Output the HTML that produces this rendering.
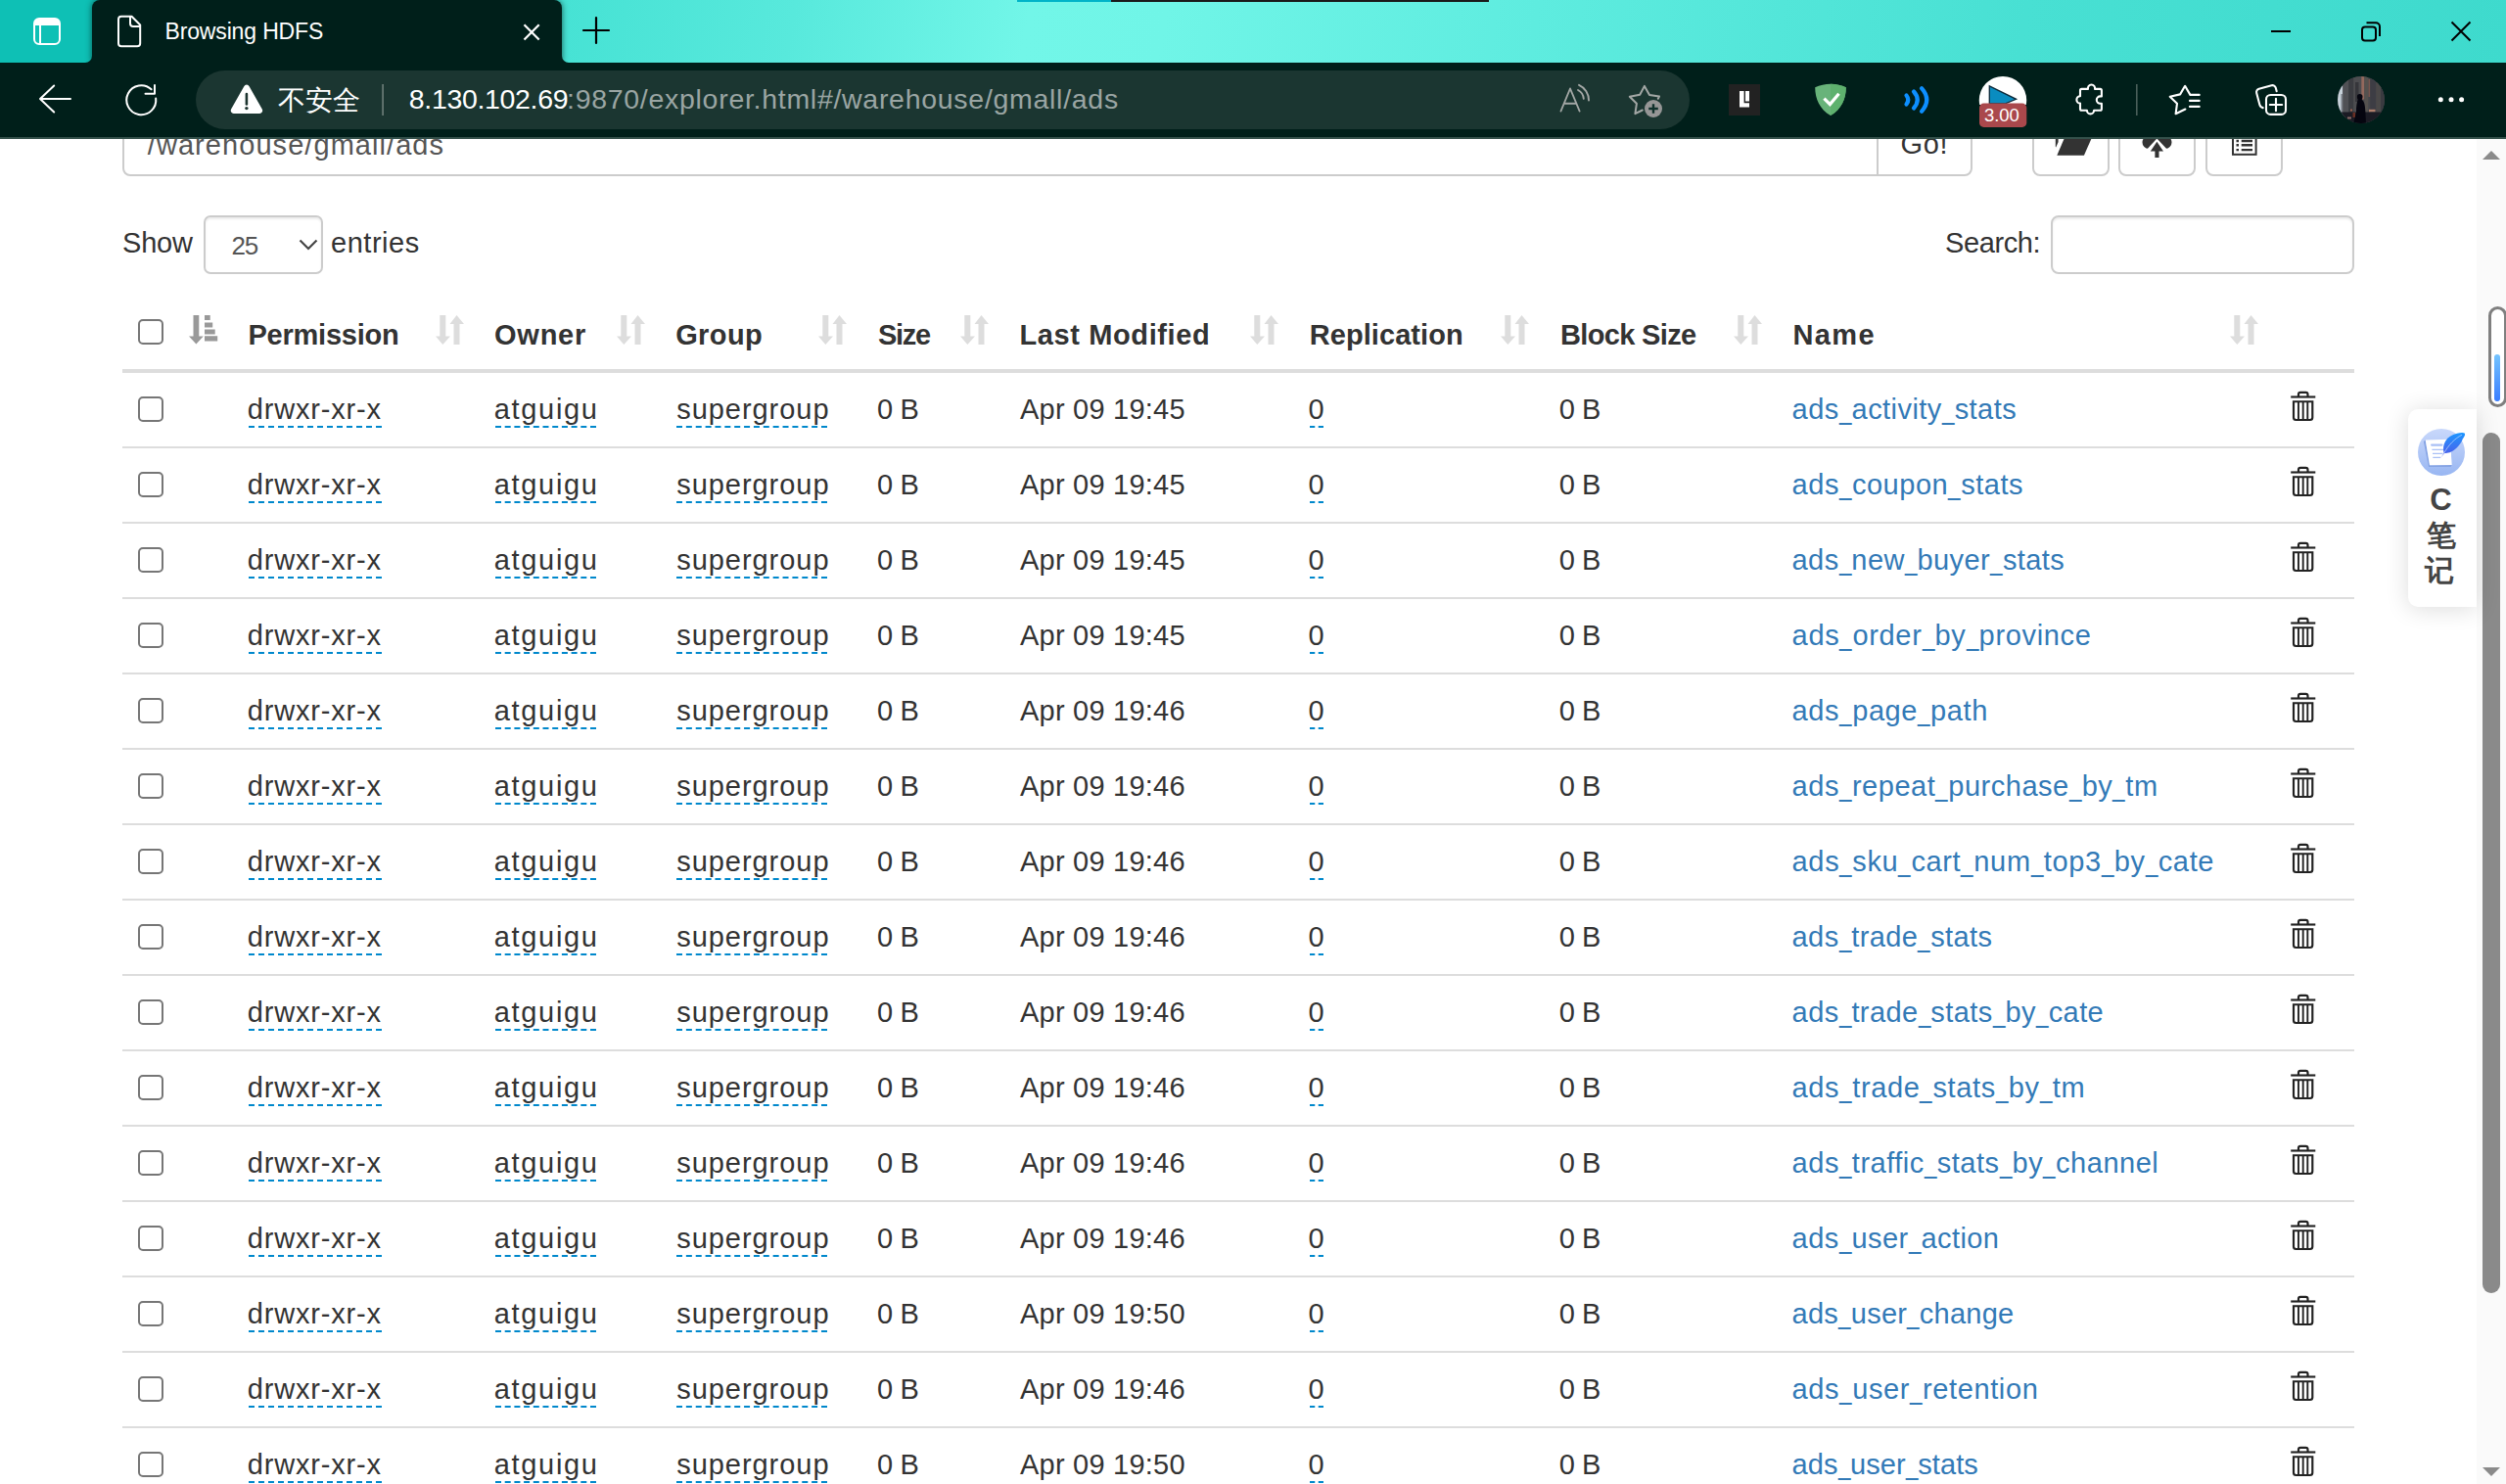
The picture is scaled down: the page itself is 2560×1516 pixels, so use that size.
<!DOCTYPE html><html lang="en"><head><meta charset="utf-8"><title>Browsing HDFS</title><style>
html,body{margin:0;padding:0}
body{width:2560px;height:1516px;overflow:hidden;position:relative;background:#fff;font-family:"Liberation Sans",sans-serif;color:#333}
.t{position:absolute;white-space:pre;line-height:normal}
.a{position:absolute}
#tabbar{position:absolute;left:0;top:0;width:2560px;height:64px;background:#001f1a}
#tbgrad{position:absolute;left:574px;top:0;width:1986px;height:64px;border-bottom-left-radius:7px;background:linear-gradient(100deg,#46e2d4 0%,#58e9dc 12%,#72f6e8 24%,#70f5e7 31%,#5eecdf 50%,#48e0d3 75%,#3edacd 100%)}
#tbleft{position:absolute;left:0;top:0;width:94px;height:64px;background:#0ec0b5;border-bottom-right-radius:7px}
#tab{position:absolute;left:94px;top:0;width:480px;height:64px;background:#001f1a;border-radius:8px 8px 0 0;box-shadow:0 0 6px rgba(0,30,25,.7)}
#toolbar{position:absolute;left:0;top:64px;width:2560px;height:76px;background:#001f1a;border-bottom:2px solid #34514b}
#pill{position:absolute;left:200px;top:8px;width:1526px;height:60px;border-radius:30px;background:#1b3631}
#page{position:absolute;left:0;top:141px;width:2560px;height:1375px;overflow:hidden;background:#fff}
.row{position:absolute;left:125px;width:2280px;height:75px;border-bottom:2px solid #ddd}
.cb{position:absolute;width:22px;height:22px;border:2px solid #767676;border-radius:5px;background:#fff}
.d{border-bottom:2px dashed #08c;padding-bottom:0}
.n i{display:inline-block;font-style:normal;letter-spacing:0;width:var(--w);transform:scaleX(.77);transform-origin:0 0}
.box{position:absolute;border:2px solid #ccc;border-radius:8px;background:#fff;box-sizing:border-box}
</style></head><body>
<div id="page">
<div class="box" style="left:125px;top:-20px;width:1794px;height:59px;border-radius:8px 0 0 8px"></div>
<span class="t" style="left:150.8px;top:-8.8px;font-size:29px;letter-spacing:1.06px;color:#555;">/warehouse/gmall/ads</span>
<div class="box" style="left:1917px;top:-20px;width:98px;height:59px;border-radius:0 8px 8px 0"></div>
<span class="t" style="left:1941.5px;top:-9.8px;font-size:29px;letter-spacing:0.66px;">Go!</span>
<div class="box" style="left:2076px;top:-20px;width:79px;height:59px"></div>
<div class="box" style="left:2164px;top:-20px;width:79px;height:59px"></div>
<div class="box" style="left:2252.5px;top:-20px;width:79px;height:59px"></div>
<span class="t" style="left:125.0px;top:91.1px;font-size:29px;letter-spacing:-0.20px;">Show</span>
<div class="box" style="left:207.500px;top:79px;width:122px;height:60px;border-radius:7px;box-shadow:inset 0 2px 2px rgba(0,0,0,.075)"></div>
<span class="t" style="left:236.5px;top:95.0px;font-size:26px;letter-spacing:-1.21px;color:#555;">25</span>
<svg class="a" style="left:304px;top:102px" width="22" height="14" viewBox="0 0 22 14"><path d="M2.5 2.5 L11 11 L19.5 2.5" fill="none" stroke="#444" stroke-width="2.2"/></svg>
<span class="t" style="left:338.0px;top:91.1px;font-size:29px;letter-spacing:0.53px;">entries</span>
<span class="t" style="left:1987.0px;top:91.1px;font-size:29px;letter-spacing:-0.40px;">Search:</span>
<div class="box" style="left:2095px;top:79px;width:310px;height:60px;box-shadow:inset 0 2px 2px rgba(0,0,0,.075)"></div>
<div class="cb" style="left:141px;top:185px"></div>
<span class="t" style="left:253.5px;top:184.7px;font-size:29px;font-weight:700;letter-spacing:-0.24px;">Permission</span>
<span class="t" style="left:505.0px;top:184.7px;font-size:29px;font-weight:700;letter-spacing:0.76px;">Owner</span>
<span class="t" style="left:690.2px;top:184.7px;font-size:29px;font-weight:700;letter-spacing:0.38px;">Group</span>
<span class="t" style="left:897.0px;top:184.7px;font-size:29px;font-weight:700;letter-spacing:-1.30px;">Size</span>
<span class="t" style="left:1041.5px;top:184.7px;font-size:29px;font-weight:700;letter-spacing:0.61px;">Last Modified</span>
<span class="t" style="left:1337.7px;top:184.7px;font-size:29px;font-weight:700;letter-spacing:0.07px;">Replication</span>
<span class="t" style="left:1594.0px;top:184.7px;font-size:29px;font-weight:700;letter-spacing:-0.66px;">Block Size</span>
<span class="t" style="left:1831.5px;top:184.7px;font-size:29px;font-weight:700;letter-spacing:1.38px;">Name</span>
<div class="a" style="left:125px;top:236px;width:2280px;height:4px;background:#ddd"></div>
<svg class="a" style="left:193px;top:181px" width="30" height="30" viewBox="0 0 30 30" ><path fill="#999" d="M4.5 0h5.8v21.5h4.5L7.4 29.5 0 21.5h4.5z"/><path fill="#999" d="M16 0h5.7v5H16zM16 7.5h8.2v5H16zM16 14.5h10.7v5H16zM16 21.3h13.2v5.2H16z"/></svg>
<svg class="a" style="left:444.6px;top:181.3px" width="29" height="30" viewBox="0 0 29 30" ><path fill="#ddd" d="M4.3 0h6v21.5h4.7L7.3 30 0 21.5h4.3z"/><path fill="#ddd" d="M18.5 30h6V9h4.5L21.5 0 14.5 9h4z"/></svg>
<svg class="a" style="left:630.2px;top:181.3px" width="29" height="30" viewBox="0 0 29 30" ><path fill="#ddd" d="M4.3 0h6v21.5h4.7L7.3 30 0 21.5h4.3z"/><path fill="#ddd" d="M18.5 30h6V9h4.5L21.5 0 14.5 9h4z"/></svg>
<svg class="a" style="left:835.8px;top:181.3px" width="29" height="30" viewBox="0 0 29 30" ><path fill="#ddd" d="M4.3 0h6v21.5h4.7L7.3 30 0 21.5h4.3z"/><path fill="#ddd" d="M18.5 30h6V9h4.5L21.5 0 14.5 9h4z"/></svg>
<svg class="a" style="left:980.6px;top:181.3px" width="29" height="30" viewBox="0 0 29 30" ><path fill="#ddd" d="M4.3 0h6v21.5h4.7L7.3 30 0 21.5h4.3z"/><path fill="#ddd" d="M18.5 30h6V9h4.5L21.5 0 14.5 9h4z"/></svg>
<svg class="a" style="left:1276.6px;top:181.3px" width="29" height="30" viewBox="0 0 29 30" ><path fill="#ddd" d="M4.3 0h6v21.5h4.7L7.3 30 0 21.5h4.3z"/><path fill="#ddd" d="M18.5 30h6V9h4.5L21.5 0 14.5 9h4z"/></svg>
<svg class="a" style="left:1532.6px;top:181.3px" width="29" height="30" viewBox="0 0 29 30" ><path fill="#ddd" d="M4.3 0h6v21.5h4.7L7.3 30 0 21.5h4.3z"/><path fill="#ddd" d="M18.5 30h6V9h4.5L21.5 0 14.5 9h4z"/></svg>
<svg class="a" style="left:1770.6px;top:181.3px" width="29" height="30" viewBox="0 0 29 30" ><path fill="#ddd" d="M4.3 0h6v21.5h4.7L7.3 30 0 21.5h4.3z"/><path fill="#ddd" d="M18.5 30h6V9h4.5L21.5 0 14.5 9h4z"/></svg>
<svg class="a" style="left:2277.6px;top:181.3px" width="29" height="30" viewBox="0 0 29 30" ><path fill="#ddd" d="M4.3 0h6v21.5h4.7L7.3 30 0 21.5h4.3z"/><path fill="#ddd" d="M18.5 30h6V9h4.5L21.5 0 14.5 9h4z"/></svg>
<div class="row" style="top:240px"></div>
<div class="cb" style="left:141px;top:264px"></div>
<span class="t d" style="left:253.8px;top:261.0px;width:135.8px;text-indent:-1.0px;font-size:29px;letter-spacing:0.82px;">drwxr-xr-x</span>
<span class="t d" style="left:505.8px;top:261.0px;width:103.0px;text-indent:-1.0px;font-size:29px;letter-spacing:1.66px;">atguigu</span>
<span class="t d" style="left:691.2px;top:261.0px;width:154.2px;text-indent:0.0px;font-size:29px;letter-spacing:0.96px;">supergroup</span>
<span class="t" style="left:896.0px;top:261.0px;font-size:29px;letter-spacing:-0.34px;">0 B</span>
<span class="t" style="left:1042.0px;top:261.0px;font-size:29px;letter-spacing:0.23px;">Apr 09 19:45</span>
<span class="t d" style="left:1337.5px;top:261.0px;width:14.0px;text-indent:-1.0px;font-size:29px;">0</span>
<span class="t" style="left:1592.8px;top:261.0px;font-size:29px;letter-spacing:-0.47px;">0 B</span>
<span class="t n" style="left:1830.6px;top:261.0px;font-size:29px;letter-spacing:0.45px;color:#337ab7;--w:12.85px;">ads<i>_</i>activity<i>_</i>stats</span>
<svg class="a" style="left:2339px;top:258px" width="28" height="32" viewBox="0 0 28 32" ><g fill="none" stroke="#222" stroke-width="2.150"><path d="M1.200 6.500H26.300"/><path d="M9 6.5V3.8a2 2 0 0 1 2-2h5.5a2 2 0 0 1 2 2V6.5"/><path d="M4 11.2H23.3V27.5a2.5 2.5 0 0 1-2.5 2.5H6.5A2.5 2.5 0 0 1 4 27.5Z"/><path d="M9 11.5V30M13.7 11.5V30M18.3 11.5V30" stroke-width="1.9"/></g></svg>
<div class="row" style="top:317px"></div>
<div class="cb" style="left:141px;top:341px"></div>
<span class="t d" style="left:253.8px;top:338.0px;width:135.8px;text-indent:-1.0px;font-size:29px;letter-spacing:0.82px;">drwxr-xr-x</span>
<span class="t d" style="left:505.8px;top:338.0px;width:103.0px;text-indent:-1.0px;font-size:29px;letter-spacing:1.66px;">atguigu</span>
<span class="t d" style="left:691.2px;top:338.0px;width:154.2px;text-indent:0.0px;font-size:29px;letter-spacing:0.96px;">supergroup</span>
<span class="t" style="left:896.0px;top:338.0px;font-size:29px;letter-spacing:-0.34px;">0 B</span>
<span class="t" style="left:1042.0px;top:338.0px;font-size:29px;letter-spacing:0.23px;">Apr 09 19:45</span>
<span class="t d" style="left:1337.5px;top:338.0px;width:14.0px;text-indent:-1.0px;font-size:29px;">0</span>
<span class="t" style="left:1592.8px;top:338.0px;font-size:29px;letter-spacing:-0.47px;">0 B</span>
<span class="t n" style="left:1830.6px;top:338.0px;font-size:29px;letter-spacing:0.53px;color:#337ab7;--w:12.93px;">ads<i>_</i>coupon<i>_</i>stats</span>
<svg class="a" style="left:2339px;top:335px" width="28" height="32" viewBox="0 0 28 32" ><g fill="none" stroke="#222" stroke-width="2.150"><path d="M1.200 6.500H26.300"/><path d="M9 6.5V3.8a2 2 0 0 1 2-2h5.5a2 2 0 0 1 2 2V6.5"/><path d="M4 11.2H23.3V27.5a2.5 2.5 0 0 1-2.5 2.5H6.5A2.5 2.5 0 0 1 4 27.5Z"/><path d="M9 11.5V30M13.7 11.5V30M18.3 11.5V30" stroke-width="1.9"/></g></svg>
<div class="row" style="top:394px"></div>
<div class="cb" style="left:141px;top:418px"></div>
<span class="t d" style="left:253.8px;top:415.0px;width:135.8px;text-indent:-1.0px;font-size:29px;letter-spacing:0.82px;">drwxr-xr-x</span>
<span class="t d" style="left:505.8px;top:415.0px;width:103.0px;text-indent:-1.0px;font-size:29px;letter-spacing:1.66px;">atguigu</span>
<span class="t d" style="left:691.2px;top:415.0px;width:154.2px;text-indent:0.0px;font-size:29px;letter-spacing:0.96px;">supergroup</span>
<span class="t" style="left:896.0px;top:415.0px;font-size:29px;letter-spacing:-0.34px;">0 B</span>
<span class="t" style="left:1042.0px;top:415.0px;font-size:29px;letter-spacing:0.23px;">Apr 09 19:45</span>
<span class="t d" style="left:1337.5px;top:415.0px;width:14.0px;text-indent:-1.0px;font-size:29px;">0</span>
<span class="t" style="left:1592.8px;top:415.0px;font-size:29px;letter-spacing:-0.47px;">0 B</span>
<span class="t n" style="left:1830.6px;top:415.0px;font-size:29px;letter-spacing:0.40px;color:#337ab7;--w:12.80px;">ads<i>_</i>new<i>_</i>buyer<i>_</i>stats</span>
<svg class="a" style="left:2339px;top:412px" width="28" height="32" viewBox="0 0 28 32" ><g fill="none" stroke="#222" stroke-width="2.150"><path d="M1.200 6.500H26.300"/><path d="M9 6.5V3.8a2 2 0 0 1 2-2h5.5a2 2 0 0 1 2 2V6.5"/><path d="M4 11.2H23.3V27.5a2.5 2.5 0 0 1-2.5 2.5H6.5A2.5 2.5 0 0 1 4 27.5Z"/><path d="M9 11.5V30M13.7 11.5V30M18.3 11.5V30" stroke-width="1.9"/></g></svg>
<div class="row" style="top:471px"></div>
<div class="cb" style="left:141px;top:495px"></div>
<span class="t d" style="left:253.8px;top:492.0px;width:135.8px;text-indent:-1.0px;font-size:29px;letter-spacing:0.82px;">drwxr-xr-x</span>
<span class="t d" style="left:505.8px;top:492.0px;width:103.0px;text-indent:-1.0px;font-size:29px;letter-spacing:1.66px;">atguigu</span>
<span class="t d" style="left:691.2px;top:492.0px;width:154.2px;text-indent:0.0px;font-size:29px;letter-spacing:0.96px;">supergroup</span>
<span class="t" style="left:896.0px;top:492.0px;font-size:29px;letter-spacing:-0.34px;">0 B</span>
<span class="t" style="left:1042.0px;top:492.0px;font-size:29px;letter-spacing:0.23px;">Apr 09 19:45</span>
<span class="t d" style="left:1337.5px;top:492.0px;width:14.0px;text-indent:-1.0px;font-size:29px;">0</span>
<span class="t" style="left:1592.8px;top:492.0px;font-size:29px;letter-spacing:-0.47px;">0 B</span>
<span class="t n" style="left:1830.6px;top:492.0px;font-size:29px;letter-spacing:0.67px;color:#337ab7;--w:13.07px;">ads<i>_</i>order<i>_</i>by<i>_</i>province</span>
<svg class="a" style="left:2339px;top:489px" width="28" height="32" viewBox="0 0 28 32" ><g fill="none" stroke="#222" stroke-width="2.150"><path d="M1.200 6.500H26.300"/><path d="M9 6.5V3.8a2 2 0 0 1 2-2h5.5a2 2 0 0 1 2 2V6.5"/><path d="M4 11.2H23.3V27.5a2.5 2.5 0 0 1-2.5 2.5H6.5A2.5 2.5 0 0 1 4 27.5Z"/><path d="M9 11.5V30M13.7 11.5V30M18.3 11.5V30" stroke-width="1.9"/></g></svg>
<div class="row" style="top:548px"></div>
<div class="cb" style="left:141px;top:572px"></div>
<span class="t d" style="left:253.8px;top:569.0px;width:135.8px;text-indent:-1.0px;font-size:29px;letter-spacing:0.82px;">drwxr-xr-x</span>
<span class="t d" style="left:505.8px;top:569.0px;width:103.0px;text-indent:-1.0px;font-size:29px;letter-spacing:1.66px;">atguigu</span>
<span class="t d" style="left:691.2px;top:569.0px;width:154.2px;text-indent:0.0px;font-size:29px;letter-spacing:0.96px;">supergroup</span>
<span class="t" style="left:896.0px;top:569.0px;font-size:29px;letter-spacing:-0.34px;">0 B</span>
<span class="t" style="left:1042.0px;top:569.0px;font-size:29px;letter-spacing:0.23px;">Apr 09 19:46</span>
<span class="t d" style="left:1337.5px;top:569.0px;width:14.0px;text-indent:-1.0px;font-size:29px;">0</span>
<span class="t" style="left:1592.8px;top:569.0px;font-size:29px;letter-spacing:-0.47px;">0 B</span>
<span class="t n" style="left:1830.6px;top:569.0px;font-size:29px;letter-spacing:0.60px;color:#337ab7;--w:13.00px;">ads<i>_</i>page<i>_</i>path</span>
<svg class="a" style="left:2339px;top:566px" width="28" height="32" viewBox="0 0 28 32" ><g fill="none" stroke="#222" stroke-width="2.150"><path d="M1.200 6.500H26.300"/><path d="M9 6.5V3.8a2 2 0 0 1 2-2h5.5a2 2 0 0 1 2 2V6.5"/><path d="M4 11.2H23.3V27.5a2.5 2.5 0 0 1-2.5 2.5H6.5A2.5 2.5 0 0 1 4 27.5Z"/><path d="M9 11.5V30M13.7 11.5V30M18.3 11.5V30" stroke-width="1.9"/></g></svg>
<div class="row" style="top:625px"></div>
<div class="cb" style="left:141px;top:649px"></div>
<span class="t d" style="left:253.8px;top:646.0px;width:135.8px;text-indent:-1.0px;font-size:29px;letter-spacing:0.82px;">drwxr-xr-x</span>
<span class="t d" style="left:505.8px;top:646.0px;width:103.0px;text-indent:-1.0px;font-size:29px;letter-spacing:1.66px;">atguigu</span>
<span class="t d" style="left:691.2px;top:646.0px;width:154.2px;text-indent:0.0px;font-size:29px;letter-spacing:0.96px;">supergroup</span>
<span class="t" style="left:896.0px;top:646.0px;font-size:29px;letter-spacing:-0.34px;">0 B</span>
<span class="t" style="left:1042.0px;top:646.0px;font-size:29px;letter-spacing:0.23px;">Apr 09 19:46</span>
<span class="t d" style="left:1337.5px;top:646.0px;width:14.0px;text-indent:-1.0px;font-size:29px;">0</span>
<span class="t" style="left:1592.8px;top:646.0px;font-size:29px;letter-spacing:-0.47px;">0 B</span>
<span class="t n" style="left:1830.6px;top:646.0px;font-size:29px;letter-spacing:0.53px;color:#337ab7;--w:12.93px;">ads<i>_</i>repeat<i>_</i>purchase<i>_</i>by<i>_</i>tm</span>
<svg class="a" style="left:2339px;top:643px" width="28" height="32" viewBox="0 0 28 32" ><g fill="none" stroke="#222" stroke-width="2.150"><path d="M1.200 6.500H26.300"/><path d="M9 6.5V3.8a2 2 0 0 1 2-2h5.5a2 2 0 0 1 2 2V6.5"/><path d="M4 11.2H23.3V27.5a2.5 2.5 0 0 1-2.5 2.5H6.5A2.5 2.5 0 0 1 4 27.5Z"/><path d="M9 11.5V30M13.7 11.5V30M18.3 11.5V30" stroke-width="1.9"/></g></svg>
<div class="row" style="top:702px"></div>
<div class="cb" style="left:141px;top:726px"></div>
<span class="t d" style="left:253.8px;top:723.0px;width:135.8px;text-indent:-1.0px;font-size:29px;letter-spacing:0.82px;">drwxr-xr-x</span>
<span class="t d" style="left:505.8px;top:723.0px;width:103.0px;text-indent:-1.0px;font-size:29px;letter-spacing:1.66px;">atguigu</span>
<span class="t d" style="left:691.2px;top:723.0px;width:154.2px;text-indent:0.0px;font-size:29px;letter-spacing:0.96px;">supergroup</span>
<span class="t" style="left:896.0px;top:723.0px;font-size:29px;letter-spacing:-0.34px;">0 B</span>
<span class="t" style="left:1042.0px;top:723.0px;font-size:29px;letter-spacing:0.23px;">Apr 09 19:46</span>
<span class="t d" style="left:1337.5px;top:723.0px;width:14.0px;text-indent:-1.0px;font-size:29px;">0</span>
<span class="t" style="left:1592.8px;top:723.0px;font-size:29px;letter-spacing:-0.47px;">0 B</span>
<span class="t n" style="left:1830.6px;top:723.0px;font-size:29px;letter-spacing:0.64px;color:#337ab7;--w:13.04px;">ads<i>_</i>sku<i>_</i>cart<i>_</i>num<i>_</i>top3<i>_</i>by<i>_</i>cate</span>
<svg class="a" style="left:2339px;top:720px" width="28" height="32" viewBox="0 0 28 32" ><g fill="none" stroke="#222" stroke-width="2.150"><path d="M1.200 6.500H26.300"/><path d="M9 6.5V3.8a2 2 0 0 1 2-2h5.5a2 2 0 0 1 2 2V6.5"/><path d="M4 11.2H23.3V27.5a2.5 2.5 0 0 1-2.5 2.5H6.5A2.5 2.5 0 0 1 4 27.5Z"/><path d="M9 11.5V30M13.7 11.5V30M18.3 11.5V30" stroke-width="1.9"/></g></svg>
<div class="row" style="top:779px"></div>
<div class="cb" style="left:141px;top:803px"></div>
<span class="t d" style="left:253.8px;top:800.0px;width:135.8px;text-indent:-1.0px;font-size:29px;letter-spacing:0.82px;">drwxr-xr-x</span>
<span class="t d" style="left:505.8px;top:800.0px;width:103.0px;text-indent:-1.0px;font-size:29px;letter-spacing:1.66px;">atguigu</span>
<span class="t d" style="left:691.2px;top:800.0px;width:154.2px;text-indent:0.0px;font-size:29px;letter-spacing:0.96px;">supergroup</span>
<span class="t" style="left:896.0px;top:800.0px;font-size:29px;letter-spacing:-0.34px;">0 B</span>
<span class="t" style="left:1042.0px;top:800.0px;font-size:29px;letter-spacing:0.23px;">Apr 09 19:46</span>
<span class="t d" style="left:1337.5px;top:800.0px;width:14.0px;text-indent:-1.0px;font-size:29px;">0</span>
<span class="t" style="left:1592.8px;top:800.0px;font-size:29px;letter-spacing:-0.47px;">0 B</span>
<span class="t n" style="left:1830.6px;top:800.0px;font-size:29px;letter-spacing:0.39px;color:#337ab7;--w:12.79px;">ads<i>_</i>trade<i>_</i>stats</span>
<svg class="a" style="left:2339px;top:797px" width="28" height="32" viewBox="0 0 28 32" ><g fill="none" stroke="#222" stroke-width="2.150"><path d="M1.200 6.500H26.300"/><path d="M9 6.5V3.8a2 2 0 0 1 2-2h5.5a2 2 0 0 1 2 2V6.5"/><path d="M4 11.2H23.3V27.5a2.5 2.5 0 0 1-2.5 2.5H6.5A2.5 2.5 0 0 1 4 27.5Z"/><path d="M9 11.5V30M13.7 11.5V30M18.3 11.5V30" stroke-width="1.9"/></g></svg>
<div class="row" style="top:856px"></div>
<div class="cb" style="left:141px;top:880px"></div>
<span class="t d" style="left:253.8px;top:877.0px;width:135.8px;text-indent:-1.0px;font-size:29px;letter-spacing:0.82px;">drwxr-xr-x</span>
<span class="t d" style="left:505.8px;top:877.0px;width:103.0px;text-indent:-1.0px;font-size:29px;letter-spacing:1.66px;">atguigu</span>
<span class="t d" style="left:691.2px;top:877.0px;width:154.2px;text-indent:0.0px;font-size:29px;letter-spacing:0.96px;">supergroup</span>
<span class="t" style="left:896.0px;top:877.0px;font-size:29px;letter-spacing:-0.34px;">0 B</span>
<span class="t" style="left:1042.0px;top:877.0px;font-size:29px;letter-spacing:0.23px;">Apr 09 19:46</span>
<span class="t d" style="left:1337.5px;top:877.0px;width:14.0px;text-indent:-1.0px;font-size:29px;">0</span>
<span class="t" style="left:1592.8px;top:877.0px;font-size:29px;letter-spacing:-0.47px;">0 B</span>
<span class="t n" style="left:1830.6px;top:877.0px;font-size:29px;letter-spacing:0.41px;color:#337ab7;--w:12.81px;">ads<i>_</i>trade<i>_</i>stats<i>_</i>by<i>_</i>cate</span>
<svg class="a" style="left:2339px;top:874px" width="28" height="32" viewBox="0 0 28 32" ><g fill="none" stroke="#222" stroke-width="2.150"><path d="M1.200 6.500H26.300"/><path d="M9 6.5V3.8a2 2 0 0 1 2-2h5.5a2 2 0 0 1 2 2V6.5"/><path d="M4 11.2H23.3V27.5a2.5 2.5 0 0 1-2.5 2.5H6.5A2.5 2.5 0 0 1 4 27.5Z"/><path d="M9 11.5V30M13.7 11.5V30M18.3 11.5V30" stroke-width="1.9"/></g></svg>
<div class="row" style="top:933px"></div>
<div class="cb" style="left:141px;top:957px"></div>
<span class="t d" style="left:253.8px;top:954.0px;width:135.8px;text-indent:-1.0px;font-size:29px;letter-spacing:0.82px;">drwxr-xr-x</span>
<span class="t d" style="left:505.8px;top:954.0px;width:103.0px;text-indent:-1.0px;font-size:29px;letter-spacing:1.66px;">atguigu</span>
<span class="t d" style="left:691.2px;top:954.0px;width:154.2px;text-indent:0.0px;font-size:29px;letter-spacing:0.96px;">supergroup</span>
<span class="t" style="left:896.0px;top:954.0px;font-size:29px;letter-spacing:-0.34px;">0 B</span>
<span class="t" style="left:1042.0px;top:954.0px;font-size:29px;letter-spacing:0.23px;">Apr 09 19:46</span>
<span class="t d" style="left:1337.5px;top:954.0px;width:14.0px;text-indent:-1.0px;font-size:29px;">0</span>
<span class="t" style="left:1592.8px;top:954.0px;font-size:29px;letter-spacing:-0.47px;">0 B</span>
<span class="t n" style="left:1830.6px;top:954.0px;font-size:29px;letter-spacing:0.62px;color:#337ab7;--w:13.02px;">ads<i>_</i>trade<i>_</i>stats<i>_</i>by<i>_</i>tm</span>
<svg class="a" style="left:2339px;top:951px" width="28" height="32" viewBox="0 0 28 32" ><g fill="none" stroke="#222" stroke-width="2.150"><path d="M1.200 6.500H26.300"/><path d="M9 6.5V3.8a2 2 0 0 1 2-2h5.5a2 2 0 0 1 2 2V6.5"/><path d="M4 11.2H23.3V27.5a2.5 2.5 0 0 1-2.5 2.5H6.5A2.5 2.5 0 0 1 4 27.5Z"/><path d="M9 11.5V30M13.7 11.5V30M18.3 11.5V30" stroke-width="1.9"/></g></svg>
<div class="row" style="top:1010px"></div>
<div class="cb" style="left:141px;top:1034px"></div>
<span class="t d" style="left:253.8px;top:1031.0px;width:135.8px;text-indent:-1.0px;font-size:29px;letter-spacing:0.82px;">drwxr-xr-x</span>
<span class="t d" style="left:505.8px;top:1031.0px;width:103.0px;text-indent:-1.0px;font-size:29px;letter-spacing:1.66px;">atguigu</span>
<span class="t d" style="left:691.2px;top:1031.0px;width:154.2px;text-indent:0.0px;font-size:29px;letter-spacing:0.96px;">supergroup</span>
<span class="t" style="left:896.0px;top:1031.0px;font-size:29px;letter-spacing:-0.34px;">0 B</span>
<span class="t" style="left:1042.0px;top:1031.0px;font-size:29px;letter-spacing:0.23px;">Apr 09 19:46</span>
<span class="t d" style="left:1337.5px;top:1031.0px;width:14.0px;text-indent:-1.0px;font-size:29px;">0</span>
<span class="t" style="left:1592.8px;top:1031.0px;font-size:29px;letter-spacing:-0.47px;">0 B</span>
<span class="t n" style="left:1830.6px;top:1031.0px;font-size:29px;letter-spacing:0.52px;color:#337ab7;--w:12.92px;">ads<i>_</i>traffic<i>_</i>stats<i>_</i>by<i>_</i>channel</span>
<svg class="a" style="left:2339px;top:1028px" width="28" height="32" viewBox="0 0 28 32" ><g fill="none" stroke="#222" stroke-width="2.150"><path d="M1.200 6.500H26.300"/><path d="M9 6.5V3.8a2 2 0 0 1 2-2h5.5a2 2 0 0 1 2 2V6.5"/><path d="M4 11.2H23.3V27.5a2.5 2.5 0 0 1-2.5 2.5H6.5A2.5 2.5 0 0 1 4 27.5Z"/><path d="M9 11.5V30M13.7 11.5V30M18.3 11.5V30" stroke-width="1.9"/></g></svg>
<div class="row" style="top:1087px"></div>
<div class="cb" style="left:141px;top:1111px"></div>
<span class="t d" style="left:253.8px;top:1108.0px;width:135.8px;text-indent:-1.0px;font-size:29px;letter-spacing:0.82px;">drwxr-xr-x</span>
<span class="t d" style="left:505.8px;top:1108.0px;width:103.0px;text-indent:-1.0px;font-size:29px;letter-spacing:1.66px;">atguigu</span>
<span class="t d" style="left:691.2px;top:1108.0px;width:154.2px;text-indent:0.0px;font-size:29px;letter-spacing:0.96px;">supergroup</span>
<span class="t" style="left:896.0px;top:1108.0px;font-size:29px;letter-spacing:-0.34px;">0 B</span>
<span class="t" style="left:1042.0px;top:1108.0px;font-size:29px;letter-spacing:0.23px;">Apr 09 19:46</span>
<span class="t d" style="left:1337.5px;top:1108.0px;width:14.0px;text-indent:-1.0px;font-size:29px;">0</span>
<span class="t" style="left:1592.8px;top:1108.0px;font-size:29px;letter-spacing:-0.47px;">0 B</span>
<span class="t n" style="left:1830.6px;top:1108.0px;font-size:29px;letter-spacing:0.43px;color:#337ab7;--w:12.83px;">ads<i>_</i>user<i>_</i>action</span>
<svg class="a" style="left:2339px;top:1105px" width="28" height="32" viewBox="0 0 28 32" ><g fill="none" stroke="#222" stroke-width="2.150"><path d="M1.200 6.500H26.300"/><path d="M9 6.5V3.8a2 2 0 0 1 2-2h5.5a2 2 0 0 1 2 2V6.5"/><path d="M4 11.2H23.3V27.5a2.5 2.5 0 0 1-2.5 2.5H6.5A2.5 2.5 0 0 1 4 27.5Z"/><path d="M9 11.5V30M13.7 11.5V30M18.3 11.5V30" stroke-width="1.9"/></g></svg>
<div class="row" style="top:1164px"></div>
<div class="cb" style="left:141px;top:1188px"></div>
<span class="t d" style="left:253.8px;top:1185.0px;width:135.8px;text-indent:-1.0px;font-size:29px;letter-spacing:0.82px;">drwxr-xr-x</span>
<span class="t d" style="left:505.8px;top:1185.0px;width:103.0px;text-indent:-1.0px;font-size:29px;letter-spacing:1.66px;">atguigu</span>
<span class="t d" style="left:691.2px;top:1185.0px;width:154.2px;text-indent:0.0px;font-size:29px;letter-spacing:0.96px;">supergroup</span>
<span class="t" style="left:896.0px;top:1185.0px;font-size:29px;letter-spacing:-0.34px;">0 B</span>
<span class="t" style="left:1042.0px;top:1185.0px;font-size:29px;letter-spacing:0.23px;">Apr 09 19:50</span>
<span class="t d" style="left:1337.5px;top:1185.0px;width:14.0px;text-indent:-1.0px;font-size:29px;">0</span>
<span class="t" style="left:1592.8px;top:1185.0px;font-size:29px;letter-spacing:-0.47px;">0 B</span>
<span class="t n" style="left:1830.6px;top:1185.0px;font-size:29px;letter-spacing:0.25px;color:#337ab7;--w:12.65px;">ads<i>_</i>user<i>_</i>change</span>
<svg class="a" style="left:2339px;top:1182px" width="28" height="32" viewBox="0 0 28 32" ><g fill="none" stroke="#222" stroke-width="2.150"><path d="M1.200 6.500H26.300"/><path d="M9 6.5V3.8a2 2 0 0 1 2-2h5.5a2 2 0 0 1 2 2V6.5"/><path d="M4 11.2H23.3V27.5a2.5 2.5 0 0 1-2.5 2.5H6.5A2.5 2.5 0 0 1 4 27.5Z"/><path d="M9 11.5V30M13.7 11.5V30M18.3 11.5V30" stroke-width="1.9"/></g></svg>
<div class="row" style="top:1241px"></div>
<div class="cb" style="left:141px;top:1265px"></div>
<span class="t d" style="left:253.8px;top:1262.0px;width:135.8px;text-indent:-1.0px;font-size:29px;letter-spacing:0.82px;">drwxr-xr-x</span>
<span class="t d" style="left:505.8px;top:1262.0px;width:103.0px;text-indent:-1.0px;font-size:29px;letter-spacing:1.66px;">atguigu</span>
<span class="t d" style="left:691.2px;top:1262.0px;width:154.2px;text-indent:0.0px;font-size:29px;letter-spacing:0.96px;">supergroup</span>
<span class="t" style="left:896.0px;top:1262.0px;font-size:29px;letter-spacing:-0.34px;">0 B</span>
<span class="t" style="left:1042.0px;top:1262.0px;font-size:29px;letter-spacing:0.23px;">Apr 09 19:46</span>
<span class="t d" style="left:1337.5px;top:1262.0px;width:14.0px;text-indent:-1.0px;font-size:29px;">0</span>
<span class="t" style="left:1592.8px;top:1262.0px;font-size:29px;letter-spacing:-0.47px;">0 B</span>
<span class="t n" style="left:1830.6px;top:1262.0px;font-size:29px;letter-spacing:0.61px;color:#337ab7;--w:13.01px;">ads<i>_</i>user<i>_</i>retention</span>
<svg class="a" style="left:2339px;top:1259px" width="28" height="32" viewBox="0 0 28 32" ><g fill="none" stroke="#222" stroke-width="2.150"><path d="M1.200 6.500H26.300"/><path d="M9 6.5V3.8a2 2 0 0 1 2-2h5.5a2 2 0 0 1 2 2V6.5"/><path d="M4 11.2H23.3V27.5a2.5 2.5 0 0 1-2.5 2.5H6.5A2.5 2.5 0 0 1 4 27.5Z"/><path d="M9 11.5V30M13.7 11.5V30M18.3 11.5V30" stroke-width="1.9"/></g></svg>
<div class="row" style="top:1318px"></div>
<div class="cb" style="left:141px;top:1342px"></div>
<span class="t d" style="left:253.8px;top:1339.0px;width:135.8px;text-indent:-1.0px;font-size:29px;letter-spacing:0.82px;">drwxr-xr-x</span>
<span class="t d" style="left:505.8px;top:1339.0px;width:103.0px;text-indent:-1.0px;font-size:29px;letter-spacing:1.66px;">atguigu</span>
<span class="t d" style="left:691.2px;top:1339.0px;width:154.2px;text-indent:0.0px;font-size:29px;letter-spacing:0.96px;">supergroup</span>
<span class="t" style="left:896.0px;top:1339.0px;font-size:29px;letter-spacing:-0.34px;">0 B</span>
<span class="t" style="left:1042.0px;top:1339.0px;font-size:29px;letter-spacing:0.23px;">Apr 09 19:50</span>
<span class="t d" style="left:1337.5px;top:1339.0px;width:14.0px;text-indent:-1.0px;font-size:29px;">0</span>
<span class="t" style="left:1592.8px;top:1339.0px;font-size:29px;letter-spacing:-0.47px;">0 B</span>
<span class="t n" style="left:1830.6px;top:1339.0px;font-size:29px;letter-spacing:0.08px;color:#337ab7;--w:12.48px;">ads<i>_</i>user<i>_</i>stats</span>
<svg class="a" style="left:2339px;top:1336px" width="28" height="32" viewBox="0 0 28 32" ><g fill="none" stroke="#222" stroke-width="2.150"><path d="M1.200 6.500H26.300"/><path d="M9 6.5V3.8a2 2 0 0 1 2-2h5.5a2 2 0 0 1 2 2V6.5"/><path d="M4 11.2H23.3V27.5a2.5 2.5 0 0 1-2.5 2.5H6.5A2.5 2.5 0 0 1 4 27.5Z"/><path d="M9 11.5V30M13.7 11.5V30M18.3 11.5V30" stroke-width="1.9"/></g></svg>
<svg class="a" style="left:2060px;top:0" width="300" height="40" viewBox="2060 141 300 40"><path fill="#333" d="M2114.500 128H2142.500L2128.900 158.800H2101.300Z"/><path fill="#333" d="M2099.800 125H2102.600V145L2100.200 150.500L2099.800 150Z"/><path fill="#333" d="M2195 152a6.500 6.500 0 0 1-6.500-6.500c0-4 3-6.500 6.500-6.500h17c3.500 0 6.500 2.500 6.500 6.500a6.500 6.500 0 0 1-6.500 6.500Z"/><path fill="#fff" d="M2203.400 141.500L2193 152.800L2196 155.500H2211L2214 152.800Z"/><path fill="#333" d="M2203.400 144.800L2210 154.500H2205.500V161H2201.400V154.500H2196.800Z"/><g fill="none" stroke="#333"><rect x="2281" y="130" width="23.600" height="27.800" stroke-width="2"/><path d="M2289.700 144H2301M2289.700 148.300H2301M2289.700 153.100H2301" stroke-width="2.400"/><path d="M2284.500 144H2287M2284.500 148.300H2287M2284.500 153.100H2287" stroke-width="2.400"/></g></svg><div class="a" style="left:2530px;top:0;width:30px;height:1375px;background:#fafafa"></div><svg class="a" style="left:2535px;top:12px" width="20" height="11" viewBox="0 0 20 11" ><path fill="#8a8a8a" d="M10 1L19 10H1Z"/></svg><svg class="a" style="left:2535px;top:1357px" width="20" height="11" viewBox="0 0 20 11" ><path fill="#8a8a8a" d="M10 10L19 1H1Z"/></svg><div class="a" style="left:2536px;top:301px;width:18px;height:879px;border-radius:9px;background:#8a8a8a"></div><div class="a" style="left:2542px;top:171.5px;width:13px;height:97px;border:3px solid #7f7f7f;border-radius:10px;background:#fff"></div><div class="a" style="left:2548px;top:221px;width:6px;height:48px;border-radius:3px;background:linear-gradient(#74c4ff,#3a7dff)"></div><div class="a" style="left:2460px;top:277px;width:70px;height:202px;border-radius:10px 0 0 10px;background:#fff;box-shadow:0 2px 24px rgba(0,0,0,.14)"></div><div class="a" style="left:2470px;top:297.2px;width:48px;height:48px;border-radius:24px;background:linear-gradient(#c9d8fb,#98b6f2)"></div><svg class="a" style="left:2466px;top:295px" width="60" height="54" viewBox="0 0 60 54" ><defs><linearGradient id="fg" x1="0" y1="0" x2="0" y2="1"><stop offset="0" stop-color="#1b97ff"/><stop offset=".55" stop-color="#3b74f2"/><stop offset="1" stop-color="#4f55e6"/></linearGradient></defs><path fill="#86a4e4" d="M9.800 15L11.700 13.400L16 39.200L38.700 38.900L37.500 40.900L15 41.100Z"/><path fill="#fff" d="M11.700 13.400L36.900 12.800L38.700 38.900L16 39.200Z"/><path d="M18.100 18.600H28.400" stroke="#a9c0f5" stroke-width="2.200" stroke-linecap="round"/><path d="M18.400 23.400H30.200M19 27.400H29.600M19.300 31.300H27.200" stroke="#a9c0f5" stroke-width="1.200"/><path fill="url(#fg)" d="M27.200 31.800L30.600 26.900C28.300 18 33 9.300 44 6.800C47 6 50.500 5.500 52 6.700C52.500 8.500 51.200 10.500 49.700 12.500C48 17.500 43.500 22.700 38 25.600C35.500 26.900 33 27.200 31.200 26.900Z"/><path d="M30.800 26.800C35 19 42 11.500 49 8.300" stroke="#cfe3ff" stroke-width=".800" fill="none" opacity=".8"/></svg>
<span class="t" style="left:2482.3px;top:352.4px;font-size:31px;font-weight:700;color:#444;">C</span>
<span class="t" style="left:2478.5px;top:386.5px;font-size:29.5px;font-weight:700;color:#444;font-family:"Liberation Sans", "Noto Sans CJK SC", sans-serif;">笔</span>
<span class="t" style="left:2476.5px;top:423.0px;font-size:29.5px;font-weight:700;color:#444;font-family:"Liberation Sans", "Noto Sans CJK SC", sans-serif;">记</span>
</div>
<div id="tabbar"><div id="tbgrad"></div><div id="tbleft"></div><div class="a" style="left:94px;top:0;width:10px;height:10px;background:#0ec0b5"></div><div class="a" style="left:564px;top:0;width:10px;height:10px;background:#46e2d4"></div><div id="tab"></div>
<div class="a" style="left:1039px;top:0;width:96px;height:2px;background:#00b4c8"></div><div class="a" style="left:1135px;top:0;width:386px;height:2px;background:#1a1a1a"></div>
<span class="t" style="left:168.5px;top:19.0px;font-size:23px;letter-spacing:-0.15px;color:#fff;">Browsing HDFS</span>
</div>
<div id="toolbar"><div id="pill"></div>
<span class="t" style="left:283.5px;top:20.0px;font-size:28px;color:#fff;font-family:"Liberation Sans", "Noto Sans CJK SC", sans-serif;">不安全</span>
<span class="t" style="left:417.8px;top:21.2px;font-size:28.5px;letter-spacing:-0.33px;color:#fff;">8.130.102.69</span>
<span class="t" style="left:579.0px;top:21.2px;font-size:28.5px;letter-spacing:0.71px;color:#9aa5a3;">:9870/explorer.html#/warehouse/gmall/ads</span>
</div>
<svg class="a" style="left:0;top:0" width="2560" height="141" viewBox="0 0 2560 141"><g fill="none" stroke="#fff" stroke-width="2"><rect x="35" y="19" width="26" height="26" rx="5"/><path d="M41 26V45"/></g><path fill="#fff" d="M35 26V24a5 5 0 0 1 5-5h16a5 5 0 0 1 5 5v2z"/><g fill="none" stroke="#fff" stroke-width="2" stroke-linejoin="round"><path d="M124 16.8H134.5L143.2 25.5V44.2a3 3 0 0 1-3 3H124a3 3 0 0 1-3-3V19.8a3 3 0 0 1 3-3Z"/><path d="M133 17V24a3 3 0 0 0 3 3H143"/></g><path d="M535.5 25.2L550.7 40.6M550.7 25.2L535.5 40.6" stroke="#fff" stroke-width="2.2" fill="none"/><path d="M596 31H622M609 18V44" stroke="#000" stroke-width="2.2" stroke-linecap="round" fill="none"/><g stroke="#000" stroke-width="2" fill="none"><path d="M2320 32H2340"/><rect x="2413" y="27.5" width="14" height="14" rx="3"/><path d="M2417.5 23.3H2427a4 4 0 0 1 4 4V37"/><path d="M2504.5 22.5L2523.5 41.5M2523.5 22.5L2504.5 41.5"/></g><path d="M72 101H41M55.200 87.500L41 101L55.200 114.500" stroke="#fff" stroke-width="2" fill="none" stroke-linecap="round" stroke-linejoin="round"/><path d="M159.2 100.5A15 15 0 1 1 154.6 91.3" stroke="#fff" stroke-width="2" fill="none" stroke-linecap="round"/><path d="M158 87V95.8H148.5" stroke="#fff" stroke-width="2" fill="none" stroke-linecap="round" stroke-linejoin="round"/><path fill="#fff" d="M249.3 88.2a3 3 0 0 1 5.3 0L267.8 111.5a3 3 0 0 1-2.6 4.4H238.7a3 3 0 0 1-2.6-4.4Z"/><path d="M251.9 96V106.5" stroke="#1c342f" stroke-width="2.6" stroke-linecap="round"/><circle cx="251.9" cy="110.6" r="1.7" fill="#1c342f"/><rect x="390.3" y="86" width="1.6" height="32" fill="#6f7f7b"/><g fill="none" stroke="#a3a7a5" stroke-width="1.9" stroke-linecap="round" stroke-linejoin="round"><path d="M1594.5 113.5L1604 90.5L1613.6 113.5M1598 105.7H1610"/><path d="M1612 92A11 11 0 0 1 1617.8 100.8"/><path d="M1613 86.8A17 17 0 0 1 1623 102.6"/></g><path fill="none" stroke="#a3a7a5" stroke-width="2" stroke-linejoin="round" stroke-linecap="round" d="M1693.800 100.800L1695 98.500L1685 96.900L1679.900 87.900L1675.200 96.800L1664.800 98.800L1671.900 105.800L1670.400 116.200L1677.800 112.500"/><circle cx="1689" cy="111" r="9" fill="#969696"/><path d="M1684.200 111H1693.800M1689 106.200V115.800" stroke="#10302b" stroke-width="2.400"/><rect x="1766" y="86" width="32" height="32" fill="#222"/><path fill="#fff" d="M1777 93h4.6v12.3h5.4v4.3H1777zM1783 93h4v10.5h-4z"/><path fill="#68b37a" d="M1870 85.8c5.5 0 11 1.2 15.8 3.4c0 11.5-4.6 22.300-15.8 28.8c-11.200-6.500-15.800-17.300-15.800-28.800c4.800-2.200 10.300-3.400 15.800-3.400z"/><path fill="#5eb16e" d="M1870 85.800c5.500 0 11 1.200 15.800 3.400c0 11.500-4.600 22.300-15.800 28.800z"/><path d="M1863.4 100.600L1869.400 106.6L1878.500 95.7" stroke="#fff" stroke-width="3.2" fill="none"/><g fill="none" stroke="#0d8fff" stroke-width="4.200" stroke-linecap="round"><path d="M1947.5 97.500Q1951 102 1947.500 106.500"/><path d="M1955 93.500Q1962.500 102 1955 110.500"/><path d="M1963 90.200Q1973.500 102 1963 113.800"/></g><clipPath id="pc"><rect x="2020" y="70" width="52" height="37"/></clipPath><circle cx="2046" cy="102.200" r="24.200" fill="#fff" clip-path="url(#pc)"/><path fill="#0a8cc0" stroke="#0e2a3a" stroke-width="1.300" d="M2032.300 87.800V106H2048L2059.600 101.300Z"/><rect x="2022" y="105.600" width="48.300" height="24.300" rx="4.500" fill="#aa484c"/><path fill="none" stroke="#fff" stroke-width="2.100" stroke-linejoin="round" d="M2126.500 90.900H2133A3.600 3.600 0 1 1 2140 90.900H2145.400A1.500 1.500 0 0 1 2146.900 92.400V98.400H2145.500A3.700 3.700 0 1 0 2145.500 105.800H2146.900V111.300A1.500 1.500 0 0 1 2145.400 112.800H2139.100A3.600 3.600 0 1 1 2131.900 112.800H2126.500A1.500 1.500 0 0 1 2125 111.300V105.500A3.600 3.600 0 1 1 2125 98.300V92.400A1.500 1.500 0 0 1 2126.500 90.900Z"/><rect x="2182" y="86" width="1.600" height="32" fill="#4a5f5a"/><g fill="none" stroke="#fff" stroke-width="2.100" stroke-linecap="round" stroke-linejoin="round"><path d="M2246.700 96.900H2237.400L2232.100 87.800L2227.100 96.400L2216.700 98.700L2224 105.650L2222.600 116.300L2232.400 111.500"/><path d="M2237 102.900H2246.700M2237 108.900H2246.700"/></g><g fill="none" stroke="#fff" stroke-width="2.100" stroke-linecap="round" stroke-linejoin="round"><path d="M2325.700 93.300L2324.800 89.800A3.500 3.500 0 0 0 2320.500 87.300L2307.700 90.700A3.500 3.500 0 0 0 2305.200 95L2308.300 106.800A4.500 4.500 0 0 0 2311.700 110.100"/><rect x="2315" y="97" width="20" height="19.900" rx="4.500"/><path d="M2325 100.800V113.200M2318.800 107H2331.200"/></g><circle cx="2493.300" cy="101.800" r="2.500" fill="#fff"/><circle cx="2504" cy="101.800" r="2.500" fill="#fff"/><circle cx="2514.600" cy="101.800" r="2.500" fill="#fff"/><defs><clipPath id="av"><circle cx="2412" cy="102" r="24"/></clipPath></defs><g clip-path="url(#av)"><rect x="2388" y="78" width="48" height="48" fill="#47484c"/><rect x="2388" y="78" width="5.300" height="48" fill="#c6d1d9"/><rect x="2391.500" y="96" width="3" height="30" fill="#7b8088"/><rect x="2393.300" y="82" width="6" height="40" fill="#505155"/><rect x="2399.300" y="80" width="5" height="40" fill="#3b3c41"/><rect x="2404.300" y="78" width="8" height="40" fill="#4d4d50"/><rect x="2406" y="84" width="3.500" height="20" fill="#36363b"/><rect x="2412.300" y="78" width="3" height="23.500" fill="#94695d"/><rect x="2415.300" y="78" width="4" height="40" fill="#55524f"/><rect x="2419.500" y="81" width="1.800" height="18" fill="#77574f"/><rect x="2421.300" y="80" width="6" height="36" fill="#3d3d44"/><rect x="2427.300" y="84" width="5" height="32" fill="#4a4848"/><rect x="2432" y="86" width="4" height="30" fill="#3a3a40"/><rect x="2388" y="114.500" width="48" height="12" fill="#1b1b24"/><rect x="2420" y="111.800" width="6.500" height="2.400" fill="#b07f6c"/><rect x="2401" y="111.500" width="2" height="2" fill="#a0604f"/><rect x="2403.500" y="115" width="2.500" height="5" fill="#6b2f24"/><rect x="2398" y="119.500" width="4" height="2" fill="#8a6a68"/><path fill="#05050f" d="M2407.900 98.700a2.800 2.800 0 0 1 5.600 0c0 1.500-.5 2.300-.8 3c2.300 1.500 3.300 5 3.700 13l.6 12h-13l3-12c0-6 .5-10 1.700-13c-.5-.8-.8-1.600-.8-3z"/></g></svg>
<span class="t" style="left:2027.0px;top:106.7px;font-size:18.5px;letter-spacing:-0.07px;color:#fff;">3.00</span>
</body></html>
